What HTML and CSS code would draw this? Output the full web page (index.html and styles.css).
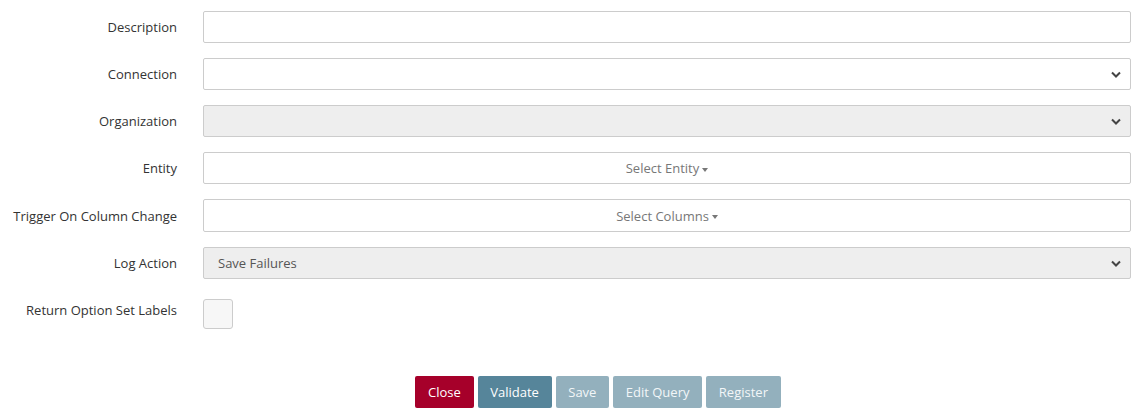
FILE: index.html
```html
<!DOCTYPE html>
<html lang="en">
<head>
    <meta charset="UTF-8">
    <meta name="viewport" content="width=device-width, initial-scale=1.0">
    <title>Register Trigger</title>
    <link rel="stylesheet" href="styles.css">
</head>
<body>
    <form class="trigger-form">
        <div class="form-row">
            <label class="form-label">Description</label>
            <div class="form-field"><input type="text" class="form-input"></div>
        </div>
        <div class="form-row">
            <label class="form-label">Connection</label>
            <div class="form-field">
                <div class="form-select">
                    <span class="select-text"></span>
                    <svg class="chevron" width="10" height="7" viewBox="0 0 10 7"><path d="M1 1.5 L5 5.5 L9 1.5" fill="none" stroke="#444" stroke-width="2"/></svg>
                </div>
            </div>
        </div>
        <div class="form-row">
            <label class="form-label">Organization</label>
            <div class="form-field">
                <div class="form-select disabled">
                    <span class="select-text"></span>
                    <svg class="chevron" width="10" height="7" viewBox="0 0 10 7"><path d="M1 1.5 L5 5.5 L9 1.5" fill="none" stroke="#444" stroke-width="2"/></svg>
                </div>
            </div>
        </div>
        <div class="form-row">
            <label class="form-label">Entity</label>
            <div class="form-field">
                <button type="button" class="multi-select">Select Entity<span class="caret"></span></button>
            </div>
        </div>
        <div class="form-row">
            <label class="form-label">Trigger On Column Change</label>
            <div class="form-field">
                <button type="button" class="multi-select tall">Select Columns<span class="caret"></span></button>
            </div>
        </div>
        <div class="form-row">
            <label class="form-label">Log Action</label>
            <div class="form-field">
                <div class="form-select disabled">
                    <span class="select-text">Save Failures</span>
                    <svg class="chevron" width="10" height="7" viewBox="0 0 10 7"><path d="M1 1.5 L5 5.5 L9 1.5" fill="none" stroke="#444" stroke-width="2"/></svg>
                </div>
            </div>
        </div>
        <div class="form-row check-row">
            <label class="form-label">Return Option Set Labels</label>
            <div class="form-field"><span class="check-box"></span></div>
        </div>

        <div class="form-actions">
            <button type="button" class="btn btn-close">Close</button>
            <button type="button" class="btn btn-primary">Validate</button>
            <button type="button" class="btn btn-disabled">Save</button>
            <button type="button" class="btn btn-disabled">Edit Query</button>
            <button type="button" class="btn btn-disabled">Register</button>
        </div>
    </form>
</body>
</html>
```

FILE: styles.css
```css
body {
    font-family: "Open Sans", Arial, sans-serif;
    font-size: 13px;
    color: #333;
    margin: 0;
    background: #fff;
}

.trigger-form {
    padding: 11px 13px 0 0;
}

.form-row {
    display: flex;
    align-items: center;
    margin-bottom: 15px;
}

.form-label {
    width: 177px;
    text-align: right;
    padding-right: 26px;
    flex-shrink: 0;
}

.form-field {
    flex: 1;
}

.form-input, .form-select, .multi-select {
    box-sizing: border-box;
    width: 100%;
    height: 32px;
    border: 1px solid #ccc;
    border-radius: 2px;
    background: #fff;
    font-family: inherit;
    font-size: 13px;
    color: #555;
}

.form-select {
    display: flex;
    align-items: center;
    justify-content: space-between;
    padding: 0 9px 0 14px;
}

.form-select.disabled {
    background: #eee;
}

.chevron {
    display: block;
}

.multi-select {
    color: #777;
    text-align: center;
    cursor: pointer;
}

.multi-select.tall {
    height: 33px;
}

.caret {
    display: inline-block;
    width: 0;
    height: 0;
    margin-left: 3px;
    vertical-align: middle;
    border-top: 4px solid #777;
    border-left: 3.5px solid transparent;
    border-right: 3.5px solid transparent;
}

.check-row {
    align-items: flex-start;
    padding-top: 5px;
}

.check-row .form-label {
    padding-top: 2px;
}

.check-box {
    display: block;
    box-sizing: border-box;
    width: 30px;
    height: 30px;
    border: 1px solid #ccc;
    border-radius: 3px;
    background: #f7f7f7;
}

.form-actions {
    display: flex;
    justify-content: center;
    gap: 4px;
    padding-left: 65px;
    margin-top: 47px;
}

.btn {
    height: 32px;
    padding: 0 12.7px;
    border: none;
    border-radius: 2px;
    font-family: inherit;
    font-size: 13px;
    color: #fff;
    cursor: pointer;
}

.btn-close {
    background-color: #a6002a;
}

.btn-primary {
    background-color: #56859a;
}

.btn-disabled {
    background-color: #93b0bd;
    color: #f2f6f8;
}
```
